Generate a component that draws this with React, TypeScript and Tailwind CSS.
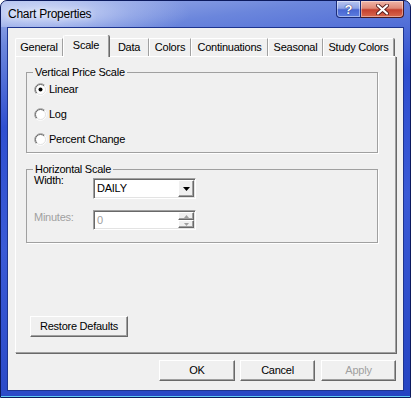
import React from "react";

const raised =
  "border border-t-white border-l-white border-r-[#696969] border-b-[#696969] shadow-[inset_-1px_-1px_0_#a0a0a0] bg-[#f0f0f0]";
const sunken =
  "border border-t-[#a0a0a0] border-l-[#a0a0a0] border-r-white border-b-white shadow-[inset_1px_1px_0_#696969,inset_-1px_-1px_0_#e3e3e3]";

function Radio({ checked }: { checked?: boolean }) {
  return (
    <svg width="13" height="13" viewBox="0 0 13 13" className="shrink-0">
      <circle cx="6.5" cy="6.5" r="5" fill="#fff" />
      <path d="M2.26 10.74A6 6 0 0 1 10.74 2.26" fill="none" stroke="#a0a0a0" />
      <path d="M10.74 2.26A6 6 0 0 1 2.26 10.74" fill="none" stroke="#fff" />
      <path d="M2.96 10.04A5 5 0 0 1 10.04 2.96" fill="none" stroke="#696969" />
      <path d="M10.04 2.96A5 5 0 0 1 2.96 10.04" fill="none" stroke="#e3e3e3" />
      {checked && <circle cx="6.5" cy="6.5" r="2" fill="#000" />}
    </svg>
  );
}

function RadioRow({ label, checked }: { label: string; checked?: boolean }) {
  return (
    <div className="flex h-[17px] items-center gap-[2px]">
      <Radio checked={checked} />
      <span className="leading-[13px]">{label}</span>
    </div>
  );
}

export default function App() {
  return (
    <div className="font-['Liberation_Sans',Arial,sans-serif] text-[11px] tracking-[-0.25px] text-black">
      <div className="relative flex h-[398px] w-[411px] flex-col overflow-hidden rounded-t-[7px] border border-[#0c1a5e] bg-[linear-gradient(172deg,#a4b4ea_0%,#6b86dc_10%,#2f4fd0_28%,#3a5ad6_55%,#2544c2_100%)] shadow-[inset_0_-1px_0_#62cdf3]">
        {/* title bar */}
        <div className="flex h-[26px] shrink-0 items-start bg-[radial-gradient(ellipse_150px_30px_at_40px_12px,rgba(225,232,252,0.85),rgba(200,212,246,0.35)_60%,rgba(200,212,246,0)_100%)]">
          <div className="flex h-[26px] items-center pl-[7px] text-[12px] tracking-[-0.25px] text-black [text-shadow:0_0_6px_rgba(255,255,255,0.9)]">
            Chart Properties
          </div>
          <div className="ml-auto mr-[6px] flex h-[17px]">
            <div className="flex h-[17px] w-[25px] items-center justify-center rounded-bl-[4px] border border-t-0 border-[#1b2c78] bg-[linear-gradient(180deg,#b8c6f0_0%,#8ea4e6_45%,#4866d2_55%,#5d7ee0_100%)] shadow-[inset_0_0_0_1px_rgba(255,255,255,0.45)]">
              <span className="text-[13px] font-bold leading-none tracking-normal text-white [text-shadow:0_0_1px_#1a2a70,0_0_1px_#1a2a70]">
                ?
              </span>
            </div>
            <div className="flex h-[17px] w-[43px] items-center justify-center rounded-br-[4px] border border-l-0 border-t-0 border-[#4a1a20] bg-[linear-gradient(180deg,#f0b5a8_0%,#e08a78_45%,#c5412e_55%,#d8684f_100%)] shadow-[inset_0_0_0_1px_rgba(255,255,255,0.4)]">
              <svg width="13" height="11" viewBox="0 0 13 11">
                <path d="M2 1.5L11 9.5M11 1.5L2 9.5" stroke="#5a2020" strokeWidth="4" strokeLinecap="round" />
                <path d="M2 1.5L11 9.5M11 1.5L2 9.5" stroke="#fff" strokeWidth="2.2" strokeLinecap="round" />
              </svg>
            </div>
          </div>
        </div>

        {/* client area */}
        <div className="ml-[6px] h-[364px] w-[397px] shrink-0 border border-[#1d348f] bg-[#f0f0f0]">
          <div className="flex flex-col px-[7px] pt-[7px]">
            {/* tabs */}
            <div className="flex h-[21px] items-end">
              <div className="flex h-[18px] w-[48px] items-center justify-center rounded-tl-[2px] border-l border-t border-r border-l-white border-t-white border-r-[#a0a0a0]">
                General
              </div>
              <div className="relative z-10 -mb-px flex h-[22px] w-[46px] items-center justify-center rounded-t-[2px] border-l border-t border-r border-l-white border-t-white border-r-[#a0a0a0] bg-[#f0f0f0] pb-[2px] shadow-[1px_0_0_#696969]">
                Scale
              </div>
              <div className="flex h-[18px] w-[40px] items-center justify-center border-l border-t border-r border-l-white border-t-white border-r-[#a0a0a0]">
                Data
              </div>
              <div className="flex h-[18px] w-[42px] items-center justify-center border-l border-t border-r border-l-white border-t-white border-r-[#a0a0a0]">
                Colors
              </div>
              <div className="flex h-[18px] w-[77px] items-center justify-center border-l border-t border-r border-l-white border-t-white border-r-[#a0a0a0]">
                Continuations
              </div>
              <div className="flex h-[18px] w-[55px] items-center justify-center border-l border-t border-r border-l-white border-t-white border-r-[#a0a0a0]">
                Seasonal
              </div>
              <div className="flex h-[18px] w-[71px] items-center justify-center rounded-tr-[2px] border-l border-t border-r border-l-white border-t-white border-r-[#a0a0a0] shadow-[1px_0_0_#696969]">
                Study Colors
              </div>
            </div>

            {/* panel */}
            <div className="flex h-[297px] w-[381px] flex-col border border-t-white border-l-white border-r-[#a0a0a0] border-b-[#a0a0a0] shadow-[1px_1px_0_#696969]">
              <fieldset className="ml-[10px] mt-[10px] h-[86px] w-[352px] border border-[#a0a0a0] pl-[7px] shadow-[1px_1px_0_#fff]">
                <legend className="ml-[-1px] px-[2px] leading-[11px]">Vertical Price Scale</legend>
                <div className="flex flex-col gap-[8px] pt-[3px]">
                  <RadioRow label="Linear" checked />
                  <RadioRow label="Log" />
                  <RadioRow label="Percent Change" />
                </div>
              </fieldset>

              <fieldset className="ml-[10px] mt-[11px] h-[79px] w-[352px] border border-[#a0a0a0] pl-[7px] shadow-[1px_1px_0_#fff]">
                <legend className="ml-[-1px] px-[2px] leading-[11px]">Horizontal Scale</legend>
                <div className="flex h-[24px] items-start">
                  <span className="w-[59px] leading-[11px]">Width:</span>
                  <div className={`mt-[3px] flex h-[21px] w-[103px] bg-white p-[1px] ${sunken}`}>
                    <div className="flex flex-1 items-center pl-[2px] leading-[13px]">DAILY</div>
                    <div className={`flex w-[16px] items-center justify-center ${raised}`}>
                      <svg width="7" height="4" viewBox="0 0 7 4">
                        <path d="M0 0H7L3.5 4Z" fill="#000" />
                      </svg>
                    </div>
                  </div>
                </div>
                <div className="mt-[11px] flex items-start">
                  <span className="mt-[1px] w-[59px] leading-[13px] text-[#a0a0a0]">Minutes:</span>
                  <div className={`flex h-[20px] w-[103px] bg-white p-[1px] ${sunken}`}>
                    <div className="flex flex-1 items-center pl-[2px] leading-[13px] text-[#a0a0a0]">0</div>
                    <div className="flex w-[16px] flex-col">
                      <div className={`flex flex-1 items-center justify-center ${raised}`}>
                        <svg width="5" height="3" viewBox="0 0 5 3">
                          <path d="M0 3H5L2.5 0Z" fill="#a0a0a0" />
                        </svg>
                      </div>
                      <div className={`flex flex-1 items-center justify-center ${raised}`}>
                        <svg width="5" height="3" viewBox="0 0 5 3">
                          <path d="M0 0H5L2.5 3Z" fill="#a0a0a0" />
                        </svg>
                      </div>
                    </div>
                  </div>
                </div>
              </fieldset>

              <button className={`ml-[14px] mt-[73px] flex h-[21px] w-[98px] items-center justify-center leading-[13px] ${raised}`}>
                Restore Defaults
              </button>
            </div>

            {/* dialog buttons */}
            <div className="mt-[7px] flex justify-end">
              <button className={`mr-[5px] flex h-[21px] w-[76px] items-center justify-center leading-[13px] ${raised}`}>
                OK
              </button>
              <button className={`mr-[6px] flex h-[21px] w-[75px] items-center justify-center leading-[13px] ${raised}`}>
                Cancel
              </button>
              <button className={`flex h-[21px] w-[75px] items-center justify-center leading-[13px] text-[#a0a0a0] ${raised}`}>
                Apply
              </button>
            </div>
          </div>
        </div>
      </div>
    </div>
  );
}
